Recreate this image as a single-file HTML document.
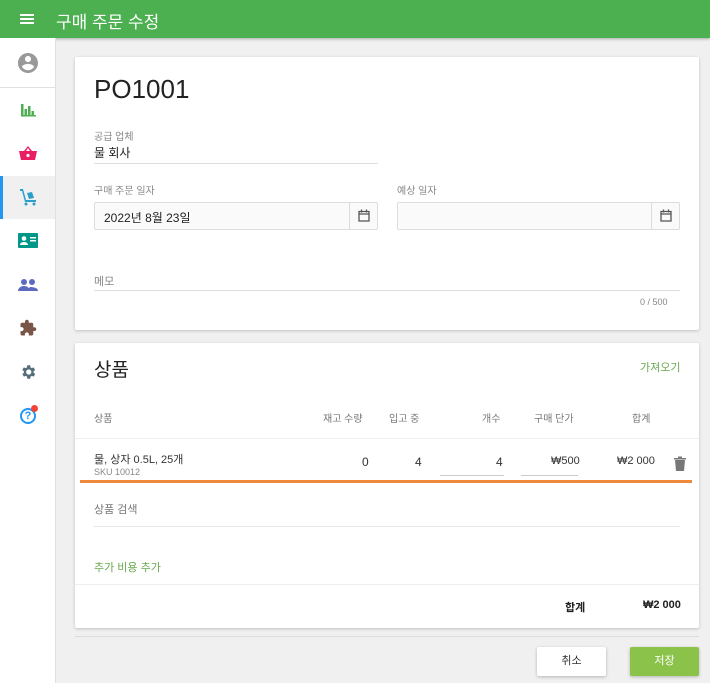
<!DOCTYPE html>
<html><head><meta charset="utf-8"><style>
*{box-sizing:border-box;margin:0;padding:0}
body{width:710px;height:683px;overflow:hidden;background:#f0f0f0;font-family:"Liberation Sans","Noto Sans CJK KR",sans-serif;position:relative;color:#222}
.a{position:absolute;white-space:nowrap}
.hdr{left:0;top:0;width:710px;height:38px;background:#4caf50;box-shadow:0 1px 3px rgba(0,0,0,.3)}
.side{left:0;top:38px;width:56px;height:645px;background:#fff}
.card{background:#fff;box-shadow:0 1px 3px rgba(0,0,0,.2);border-radius:2px}
.lbl{font-size:10px;color:#888}
.val{font-size:12px;color:#222}
.line{height:1px;background:#ddd}
.box{border:1px solid #ddd;background:#fafafa;border-radius:2px}
.th{font-size:10px;color:#777}
.td{font-size:12px;color:#333}
</style></head><body>
<div class="a hdr"></div>
<div class="a" style="left:20px;top:14px;width:14px;height:2px;background:#fff;box-shadow:0 4px 0 #fff,0 8px 0 #fff"></div>
<div class="a" style="left:56px;top:8px;font-size:17px;color:#fff">구매 주문 수정</div>
<div class="a side"></div>
<div class="a" style="left:0;top:87px;width:56px;height:1px;background:#e0e0e0"></div>
<svg class="a" style="left:16px;top:51px" width="24" height="24" viewBox="0 0 24 24"><path fill="#999" d="M12 2C6.5 2 2 6.5 2 12s4.5 10 10 10 10-4.5 10-10S17.5 2 12 2zm0 3c1.7 0 3 1.3 3 3s-1.3 3-3 3-3-1.3-3-3 1.3-3 3-3zm0 14.2c-2.5 0-4.7-1.3-6-3.2 0-2 4-3.1 6-3.1s6 1.1 6 3.1c-1.3 1.9-3.5 3.2-6 3.2z"/></svg>
<svg class="a" style="left:20px;top:102px" width="16" height="16" viewBox="0 0 16 16"><path fill="#4caf50" d="M1 2h2.5v12H1zM4.5 7h2.5v7H4.5zM8 4h2.5v10H8zM11.5 9h2.5v5h-2.5zM1 13h15v1.5H1z"/></svg>
<svg class="a" style="left:19px;top:145px" width="18" height="16" viewBox="0 0 18 16"><path fill="#e91e63" d="M0 6h18l-2 9H2zM5 6l4-5 4 5h-2L9 3 7 6z"/><circle cx="9" cy="10.5" r="1.6" fill="#fff"/></svg>
<div class="a" style="left:0;top:176px;width:56px;height:43px;background:#f0f0f0"></div>
<div class="a" style="left:0;top:176px;width:3px;height:43px;background:#2196f3"></div>
<div class="a" style="left:55px;top:38px;width:1px;height:645px;background:#e0e0e0"></div>
<svg class="a" style="left:19px;top:188px" width="18" height="18" viewBox="0 0 18 18"><path fill="#2aa0c8" d="M1 1h3l3 11h10v2H6L3 3H1zM8 5l5-1 2 6-5 1z"/><circle cx="7" cy="16" r="1.5" fill="#2aa0c8"/><circle cx="15" cy="16" r="1.5" fill="#2aa0c8"/></svg>
<svg class="a" style="left:18px;top:233px" width="20" height="15" viewBox="0 0 20 15"><rect width="20" height="15" rx="1" fill="#009688"/><circle cx="6" cy="5.5" r="2.3" fill="#fff"/><path fill="#fff" d="M2 12c0-2 2-3 4-3s4 1 4 3zM12 4h6v1.5h-6zM12 7h6v1.5h-6z"/></svg>
<svg class="a" style="left:18px;top:278px" width="20" height="14" viewBox="0 0 20 14"><circle cx="6" cy="4" r="3" fill="#5c6bc0"/><circle cx="14" cy="4" r="3" fill="#5c6bc0"/><path fill="#5c6bc0" d="M0 13c0-3 3-5 6-5s6 2 6 5zM10 13c0-2 1-3 2-4 4 0 8 1 8 4z"/></svg>
<svg class="a" style="left:19px;top:319px" width="18" height="18" viewBox="0 0 24 24"><path fill="#795548" d="M20.5 11H19V7c0-1.1-.9-2-2-2h-4V3.5a2.5 2.5 0 00-5 0V5H4c-1.1 0-2 .9-2 2v3.8h1.5c1.5 0 2.7 1.2 2.7 2.7S5 16.2 3.5 16.2H2V20c0 1.1.9 2 2 2h3.8v-1.5c0-1.5 1.2-2.7 2.7-2.7s2.7 1.2 2.7 2.7V22H17c1.1 0 2-.9 2-2v-4h1.5a2.5 2.5 0 000-5z"/></svg>
<svg class="a" style="left:19px;top:363px" width="18" height="18" viewBox="0 0 24 24"><path fill="#546e7a" d="M19.4 13a7.8 7.8 0 000-2l2.1-1.6-2-3.5-2.5 1a7.3 7.3 0 00-1.7-1L15 3h-4l-.4 2.9a7.3 7.3 0 00-1.7 1l-2.5-1-2 3.5L6.6 11a7.8 7.8 0 000 2l-2.1 1.6 2 3.5 2.5-1c.5.4 1.1.7 1.7 1L11 21h4l.4-2.9c.6-.3 1.2-.6 1.7-1l2.5 1 2-3.5zM13 15.5a3.5 3.5 0 110-7 3.5 3.5 0 010 7z"/></svg>
<div class="a" style="left:20px;top:408px;width:16px;height:16px;border:2px solid #2196f3;border-radius:50%;font-size:11px;font-weight:bold;color:#2196f3;text-align:center;line-height:12px">?</div>
<div class="a" style="left:31px;top:405px;width:7px;height:7px;border-radius:50%;background:#f44336"></div>

<div class="a card" style="left:75px;top:57px;width:624px;height:273px"></div>
<div class="a" style="left:94px;top:74px;font-size:26px;color:#222">PO1001</div>
<div class="a lbl" style="left:94px;top:128px">공급 업체</div>
<div class="a val" style="left:94px;top:144px">물 회사</div>
<div class="a line" style="left:94px;top:163px;width:284px"></div>
<div class="a lbl" style="left:94px;top:182px">구매 주문 일자</div>
<div class="a box" style="left:94px;top:202px;width:284px;height:28px"></div>
<div class="a" style="left:349px;top:202px;width:1px;height:28px;background:#ddd"></div>
<div class="a val" style="left:104px;top:209px">2022년 8월 23일</div>
<div class="a lbl" style="left:397px;top:182px">예상 일자</div>
<div class="a box" style="left:397px;top:202px;width:283px;height:28px"></div>
<div class="a" style="left:651px;top:202px;width:1px;height:28px;background:#ddd"></div>
<svg class="a" style="left:358px;top:209px" width="12" height="13" viewBox="0 0 12 13"><path fill="none" stroke="#555" stroke-width="1.3" d="M1 2.5h10v9.5H1zM1 5h10M3.5 0.5v3M8.5 0.5v3"/></svg>
<svg class="a" style="left:660px;top:209px" width="12" height="13" viewBox="0 0 12 13"><path fill="none" stroke="#555" stroke-width="1.3" d="M1 2.5h10v9.5H1zM1 5h10M3.5 0.5v3M8.5 0.5v3"/></svg>
<div class="a lbl" style="left:94px;top:273px;font-size:11px">메모</div>
<div class="a line" style="left:94px;top:290px;width:586px"></div>
<div class="a lbl" style="left:640px;top:297px;font-size:9px">0 / 500</div>

<div class="a card" style="left:75px;top:343px;width:624px;height:285px"></div>
<div class="a" style="left:94px;top:355px;font-size:19px">상품</div>
<div class="a" style="left:640px;top:359px;font-size:11px;color:#6aa84f">가져오기</div>
<div class="a th" style="left:94px;top:410px">상품</div>
<div class="a th" style="left:323px;top:410px">재고 수량</div>
<div class="a th" style="left:389px;top:410px">입고 중</div>
<div class="a th" style="left:482px;top:410px">개수</div>
<div class="a th" style="left:534px;top:410px">구매 단가</div>
<div class="a th" style="left:632px;top:410px">합계</div>
<div class="a line" style="left:75px;top:438px;width:624px;background:#eee"></div>
<div class="a td" style="left:94px;top:451px;font-size:11px">물, 상자 0.5L, 25개</div>
<div class="a" style="left:94px;top:467px;font-size:9px;color:#888">SKU 10012</div>
<div class="a td" style="left:362px;top:455px">0</div>
<div class="a td" style="left:415px;top:455px">4</div>
<div class="a td" style="left:496px;top:455px">4</div>
<div class="a line" style="left:440px;top:475px;width:64px;background:#ccc"></div>
<div class="a td" style="left:551px;top:455px;font-size:11px">₩500</div>
<div class="a line" style="left:521px;top:475px;width:57px;background:#ccc"></div>
<div class="a td" style="left:617px;top:455px;font-size:11px">₩2 000</div>
<svg class="a" style="left:674px;top:456px" width="12" height="15" viewBox="0 0 12 15"><path fill="#777" d="M0 2h12v1.5H0zM4 0.5h4V2H4zM1 4h10l-1 11H2z"/></svg>
<div class="a" style="left:80px;top:480px;width:612px;height:3px;background:#ef8a3c"></div>
<div class="a" style="left:94px;top:501px;font-size:11px;color:#777">상품 검색</div>
<div class="a line" style="left:94px;top:526px;width:586px;background:#e6e6e6"></div>
<div class="a" style="left:94px;top:559px;font-size:11px;color:#6aa84f">추가 비용 추가</div>
<div class="a line" style="left:75px;top:584px;width:624px;background:#eee"></div>
<div class="a" style="left:565px;top:599px;font-size:11px;font-weight:bold">합계</div>
<div class="a" style="left:643px;top:599px;font-size:11px;font-weight:bold">₩2 000</div>

<div class="a line" style="left:75px;top:636px;width:624px;background:#ddd"></div>
<div class="a" style="left:537px;top:647px;width:69px;height:29px;background:#fff;box-shadow:0 1px 3px rgba(0,0,0,.25);border-radius:2px;font-size:11px;text-align:center;line-height:29px;color:#333">취소</div>
<div class="a" style="left:630px;top:647px;width:69px;height:29px;background:#8bc34a;box-shadow:0 1px 3px rgba(0,0,0,.25);border-radius:2px;font-size:11px;text-align:center;line-height:29px;color:#fff">저장</div>
</body></html>
